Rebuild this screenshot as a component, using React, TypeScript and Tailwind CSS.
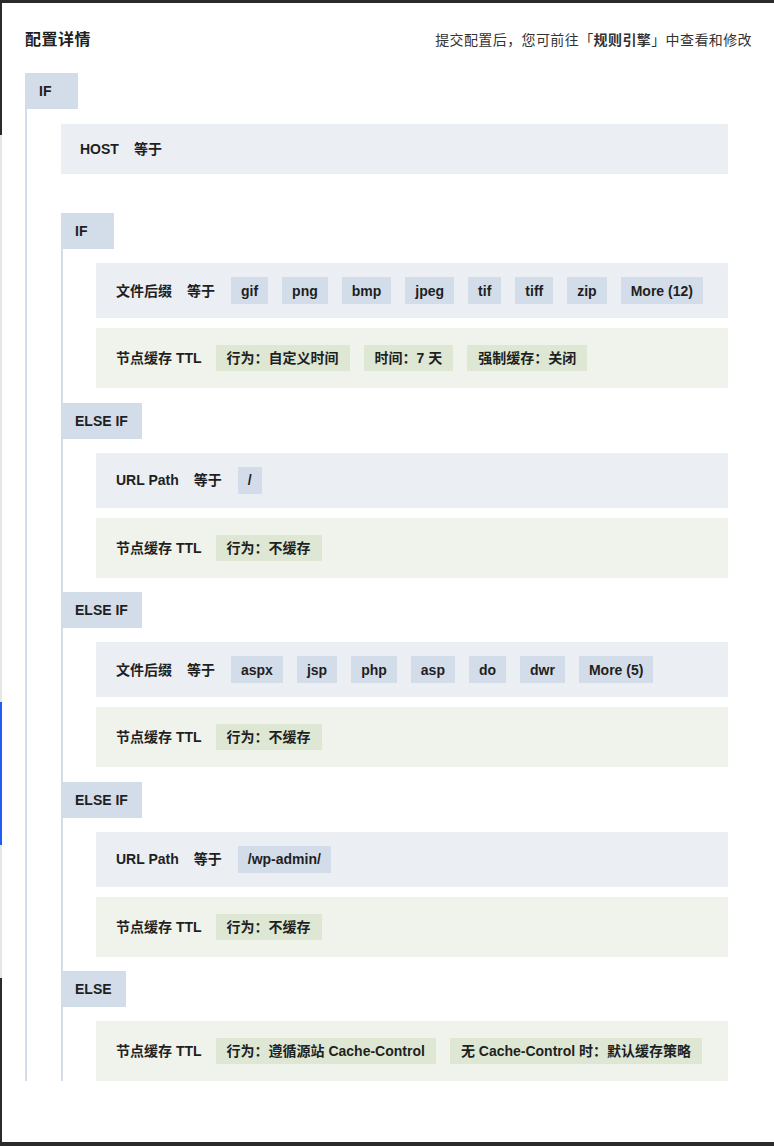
import React from 'react'

type Row = { kind: 'cond' | 'action'; label: string; op?: string; chips: string[] }
type Branch = { tag: string; rows: Row[] }

const font = { fontFamily: '"Liberation Sans", "Noto Sans CJK SC", sans-serif' }

const branches: Branch[] = [
  {
    tag: 'IF',
    rows: [
      { kind: 'cond', label: '文件后缀', op: '等于', chips: ['gif', 'png', 'bmp', 'jpeg', 'tif', 'tiff', 'zip', 'More (12)'] },
      { kind: 'action', label: '节点缓存 TTL', chips: ['行为：自定义时间', '时间：7 天', '强制缓存：关闭'] },
    ],
  },
  {
    tag: 'ELSE IF',
    rows: [
      { kind: 'cond', label: 'URL Path', op: '等于', chips: ['/'] },
      { kind: 'action', label: '节点缓存 TTL', chips: ['行为：不缓存'] },
    ],
  },
  {
    tag: 'ELSE IF',
    rows: [
      { kind: 'cond', label: '文件后缀', op: '等于', chips: ['aspx', 'jsp', 'php', 'asp', 'do', 'dwr', 'More (5)'] },
      { kind: 'action', label: '节点缓存 TTL', chips: ['行为：不缓存'] },
    ],
  },
  {
    tag: 'ELSE IF',
    rows: [
      { kind: 'cond', label: 'URL Path', op: '等于', chips: ['/wp-admin/'] },
      { kind: 'action', label: '节点缓存 TTL', chips: ['行为：不缓存'] },
    ],
  },
  {
    tag: 'ELSE',
    rows: [{ kind: 'action', label: '节点缓存 TTL', chips: ['行为：遵循源站 Cache-Control', '无 Cache-Control 时：默认缓存策略'] }],
  },
]

function Tag({ children }: { children: React.ReactNode }) {
  return (
    <div className="flex">
      <div className="h-9 min-w-[53px] px-[14px] flex items-center bg-[#d3dce9] text-sm font-bold text-[#1f1f1f]">
        {children}
      </div>
    </div>
  )
}

function RuleRow({ row }: { row: Row }) {
  if (row.kind === 'cond') {
    return (
      <div className="h-[55px] flex items-center pl-5 bg-[#ebeef3] text-sm font-bold text-[#1f1f1f]">
        <span>{row.label}</span>
        <span className="ml-[15px]">{row.op}</span>
        <div className="ml-[16px] flex gap-[14px]">
          {row.chips.map((c) => (
            <span key={c} className="h-[27px] px-[10px] flex items-center bg-[#d3dce9]">
              {c}
            </span>
          ))}
        </div>
      </div>
    )
  }
  return (
    <div className="h-[60px] flex items-center pl-5 bg-[#f0f3ec] text-sm font-bold text-[#1f1f1f]">
      <span>{row.label}</span>
      <div className="ml-[14px] flex gap-[14px]">
        {row.chips.map((c) => (
          <span key={c} className="h-[26px] px-[11px] flex items-center bg-[#dde7d3]">
            {c}
          </span>
        ))}
      </div>
    </div>
  )
}

export default function App() {
  return (
    <div className="w-[774px] h-[1146px] bg-[#2b2b2b] flex flex-col pt-[3px] pb-[4px]" style={font}>
      <div className="flex-1 flex">
        {/* strip of the page behind the drawer */}
        <div className="w-[2px] flex flex-col">
          <div className="h-[132px] bg-[#2b2b2b]" />
          <div className="h-[567px] bg-[#e6e6e6]" />
          <div className="h-[143px] bg-[#1f5ef0]" />
          <div className="h-[133px] bg-[#e6e6e6]" />
          <div className="flex-1 bg-[#2b2b2b]" />
        </div>

        <div className="flex-1 bg-white pl-[23px] pr-[22px] pt-[25px]">
          <div className="flex items-center justify-between h-6">
            <h1 className="text-base font-bold tracking-[0.5px] text-[#1f1f1f]">配置详情</h1>
            <p className="text-sm tracking-[0.4px] text-[#333]">
              提交配置后，您可前往「<span className="font-bold">规则引擎</span>」中查看和修改
            </p>
          </div>

          <div className="mt-[21px] pr-6">
            <Tag>IF</Tag>
            <div className="border-l-2 border-[#d3dce9] pl-[34px] pt-[15px]">
              <div className="h-[50px] flex items-center pl-[19px] bg-[#ebeef3] text-sm font-bold text-[#1f1f1f]">
                <span>HOST</span>
                <span className="ml-[15px]">等于</span>
              </div>

              <div className="mt-[39px] flex flex-col">
                {branches.map((b, i) => (
                  <div key={i}>
                    <Tag>{b.tag}</Tag>
                    <div
                      className={
                        i < branches.length - 1
                          ? 'border-l-2 border-[#d3dce9] pl-[33px] pt-[14px] pb-[14.5px] flex flex-col gap-[10px]'
                          : 'border-l-2 border-[#d3dce9] pl-[33px] pt-[14px] flex flex-col gap-[10px]'
                      }
                    >
                      {b.rows.map((r, j) => (
                        <RuleRow key={j} row={r} />
                      ))}
                    </div>
                  </div>
                ))}
              </div>
            </div>
          </div>
        </div>
      </div>
    </div>
  )
}
